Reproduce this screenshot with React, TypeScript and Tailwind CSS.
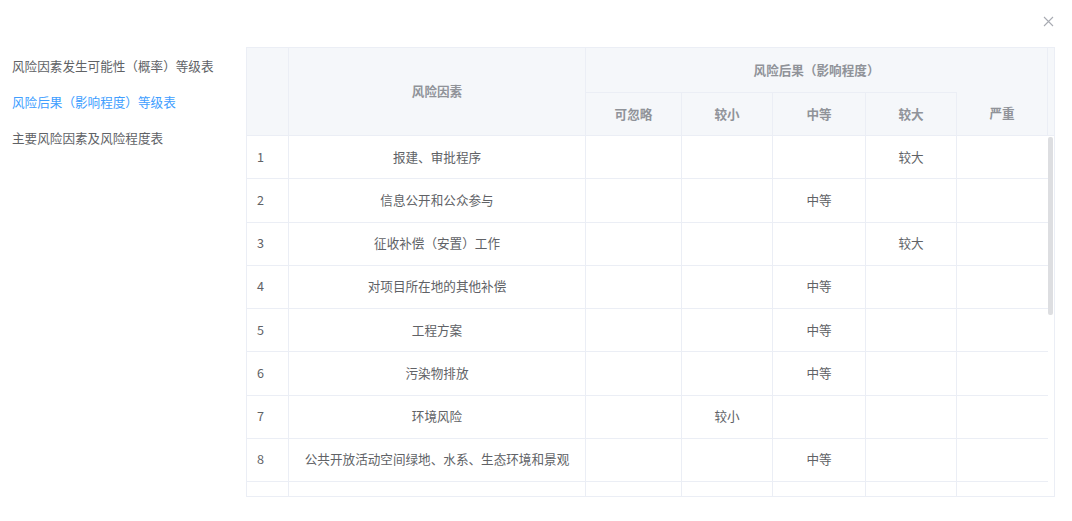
import React from "react";

const LEVELS = ["可忽略", "较小", "中等", "较大", "严重"];

const ROWS: { no: string; name: string; level: string }[] = [
  { no: "1", name: "报建、审批程序", level: "较大" },
  { no: "2", name: "信息公开和公众参与", level: "中等" },
  { no: "3", name: "征收补偿（安置）工作", level: "较大" },
  { no: "4", name: "对项目所在地的其他补偿", level: "中等" },
  { no: "5", name: "工程方案", level: "中等" },
  { no: "6", name: "污染物排放", level: "中等" },
  { no: "7", name: "环境风险", level: "较小" },
  { no: "8", name: "公共开放活动空间绿地、水系、生态环境和景观", level: "中等" },
  { no: "", name: "", level: "" },
];

const MENU = [
  { label: "风险因素发生可能性（概率）等级表", active: false },
  { label: "风险后果（影响程度）等级表", active: true },
  { label: "主要风险因素及风险程度表", active: false },
];

export default function App() {
  return (
    <div
      className="relative w-[1072px] h-[521px] bg-white overflow-hidden text-[12.6px] text-[#606266]"
      style={{ fontFamily: '"Noto Sans CJK SC", "Noto Sans", sans-serif' }}
    >
      <button className="absolute top-[15px] right-[18px] w-[12px] h-[12px] flex items-center justify-center">
        <svg width="11" height="11" viewBox="0 0 11 11">
          <path d="M1 1L10 10M10 1L1 10" stroke="#a8abb2" strokeWidth="1.1" fill="none" />
        </svg>
      </button>

      <div className="flex pt-[47px]">
        <div className="w-[246px] pl-[12px] pt-[1px] flex flex-col">
          {MENU.map((m) => (
            <div
              key={m.label}
              className={`h-[36px] leading-[36px] whitespace-nowrap ${m.active ? "text-[#409eff]" : "text-[#606266]"}`}
            >
              {m.label}
            </div>
          ))}
        </div>

        <div className="w-[809px] h-[450px] border border-[#ebeef5] flex flex-col overflow-hidden">
          {/* header */}
          <div className="grid grid-cols-[42px_297px_96px_91px_93px_91px_91px_6px] grid-rows-[44px_43px] bg-[#f5f7fa] border-b border-[#ebeef5] font-bold text-[#909399] shrink-0">
            <div className="row-span-2 border-r border-[#ebeef5]" />
            <div className="row-span-2 border-r border-[#ebeef5] flex items-center justify-center">风险因素</div>
            <div className="col-span-5 border-r border-[#ebeef5] flex items-center justify-center">风险后果（影响程度）</div>
            <div className="row-span-2" />
            {LEVELS.map((l, i) => (
              <div
                key={l}
                className={`flex items-center justify-center border-r border-[#ebeef5] ${i < 4 ? "border-t" : ""}`}
              >
                {l}
              </div>
            ))}
          </div>

          {/* body */}
          <div className="flex flex-1 min-h-0 overflow-hidden">
            <div className="w-[801px] flex flex-col">
              {ROWS.map((r, idx) => (
                <div
                  key={idx}
                  className="grid grid-cols-[42px_297px_96px_91px_93px_91px_91px] h-[43.25px] shrink-0 border-b border-[#ebeef5]"
                >
                  <div className="border-r border-[#ebeef5] flex items-center pl-[10px]">{r.no}</div>
                  <div className="border-r border-[#ebeef5] flex items-center justify-center whitespace-nowrap">{r.name}</div>
                  {LEVELS.map((l, i) => (
                    <div
                      key={l}
                      className={`flex items-center justify-center ${i < 4 ? "border-r border-[#ebeef5]" : ""}`}
                    >
                      {r.level === l ? l : ""}
                    </div>
                  ))}
                </div>
              ))}
            </div>
            <div className="w-[6px] pt-[1px] flex justify-start">
              <div className="w-[5px] h-[178px] rounded-[2px] bg-[#dddee1]" />
            </div>
          </div>
        </div>
      </div>
    </div>
  );
}
